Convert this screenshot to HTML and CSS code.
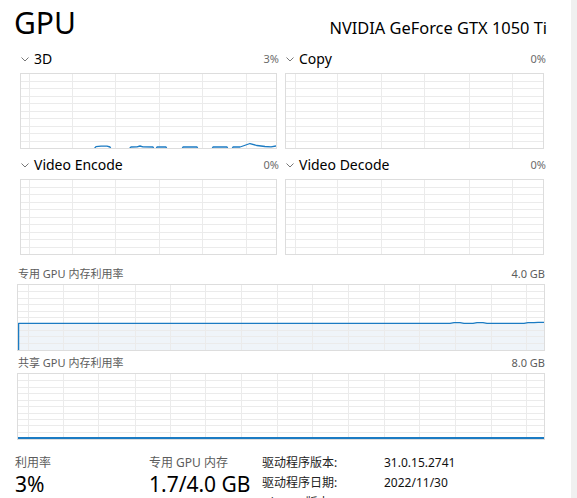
FILE: index.html
```html
<!DOCTYPE html>
<html lang="zh-CN">
<head>
<meta charset="utf-8">
<title>GPU</title>
<link rel="stylesheet" href="styles.css">
</head>
<body>
<div class="window">
  <main class="content">
    <header class="head">
      <h1 class="title">GPU</h1>
      <div class="model">NVIDIA GeForce GTX 1050 Ti</div>
    </header>

    <section class="engines">
      <div class="engine">
        <div class="eng-head">
          <svg class="chev" width="8" height="5" viewBox="0 0 8 5"><polyline points="0.5,0.5 4,4 7.5,0.5" /></svg>
          <span class="eng-name">3D</span>
          <span class="pct">3%</span>
        </div>
        <div class="chart small">
          <svg viewBox="0 0 255 74" width="255" height="74" shape-rendering="crispEdges">
            <g class="grid">
              <line x1="0" y1="7.5" x2="255" y2="7.5"/><line x1="0" y1="14.5" x2="255" y2="14.5"/><line x1="0" y1="22.5" x2="255" y2="22.5"/><line x1="0" y1="29.5" x2="255" y2="29.5"/><line x1="0" y1="37.5" x2="255" y2="37.5"/><line x1="0" y1="44.5" x2="255" y2="44.5"/><line x1="0" y1="52.5" x2="255" y2="52.5"/><line x1="0" y1="59.5" x2="255" y2="59.5"/><line x1="0" y1="67.5" x2="255" y2="67.5"/>
              <line x1="8.5" y1="0" x2="8.5" y2="74"/><line x1="51.5" y1="0" x2="51.5" y2="74"/><line x1="94.5" y1="0" x2="94.5" y2="74"/><line x1="138.5" y1="0" x2="138.5" y2="74"/><line x1="181.5" y1="0" x2="181.5" y2="74"/><line x1="225.5" y1="0" x2="225.5" y2="74"/>
            </g>
            <polyline class="usage" shape-rendering="auto" points="0,75 73,75 75,72.6 80,72.2 86,72.2 89,73 90,75 108,75 110,73 116,72.8 119,72 122,72.8 132,73 133,75 135,75 136,73 145,73 146,75 161,75 162,73 176,73 177,75 191,75 192,73 206,73 207,75 211,75 212,73 219,73 222,72 229,69.5 236,71.5 244,72.5 250,72.8 255,72"/>
          </svg>
        </div>
      </div>

      <div class="engine">
        <div class="eng-head">
          <svg class="chev" width="8" height="5" viewBox="0 0 8 5"><polyline points="0.5,0.5 4,4 7.5,0.5" /></svg>
          <span class="eng-name">Copy</span>
          <span class="pct">0%</span>
        </div>
        <div class="chart small">
          <svg viewBox="0 0 257 74" width="257" height="74" shape-rendering="crispEdges">
            <g class="grid">
              <line x1="0" y1="7.5" x2="257" y2="7.5"/><line x1="0" y1="14.5" x2="257" y2="14.5"/><line x1="0" y1="22.5" x2="257" y2="22.5"/><line x1="0" y1="29.5" x2="257" y2="29.5"/><line x1="0" y1="37.5" x2="257" y2="37.5"/><line x1="0" y1="44.5" x2="257" y2="44.5"/><line x1="0" y1="52.5" x2="257" y2="52.5"/><line x1="0" y1="59.5" x2="257" y2="59.5"/><line x1="0" y1="67.5" x2="257" y2="67.5"/>
              <line x1="9.5" y1="0" x2="9.5" y2="74"/><line x1="51.5" y1="0" x2="51.5" y2="74"/><line x1="95.5" y1="0" x2="95.5" y2="74"/><line x1="138.5" y1="0" x2="138.5" y2="74"/><line x1="183.5" y1="0" x2="183.5" y2="74"/><line x1="226.5" y1="0" x2="226.5" y2="74"/>
            </g>
          </svg>
        </div>
      </div>

      <div class="engine">
        <div class="eng-head">
          <svg class="chev" width="8" height="5" viewBox="0 0 8 5"><polyline points="0.5,0.5 4,4 7.5,0.5" /></svg>
          <span class="eng-name">Video Encode</span>
          <span class="pct">0%</span>
        </div>
        <div class="chart small">
          <svg viewBox="0 0 255 74" width="255" height="74" shape-rendering="crispEdges">
            <g class="grid">
              <line x1="0" y1="7.5" x2="255" y2="7.5"/><line x1="0" y1="14.5" x2="255" y2="14.5"/><line x1="0" y1="22.5" x2="255" y2="22.5"/><line x1="0" y1="29.5" x2="255" y2="29.5"/><line x1="0" y1="37.5" x2="255" y2="37.5"/><line x1="0" y1="44.5" x2="255" y2="44.5"/><line x1="0" y1="52.5" x2="255" y2="52.5"/><line x1="0" y1="59.5" x2="255" y2="59.5"/><line x1="0" y1="67.5" x2="255" y2="67.5"/>
              <line x1="8.5" y1="0" x2="8.5" y2="74"/><line x1="51.5" y1="0" x2="51.5" y2="74"/><line x1="94.5" y1="0" x2="94.5" y2="74"/><line x1="138.5" y1="0" x2="138.5" y2="74"/><line x1="181.5" y1="0" x2="181.5" y2="74"/><line x1="225.5" y1="0" x2="225.5" y2="74"/>
            </g>
          </svg>
        </div>
      </div>

      <div class="engine">
        <div class="eng-head">
          <svg class="chev" width="8" height="5" viewBox="0 0 8 5"><polyline points="0.5,0.5 4,4 7.5,0.5" /></svg>
          <span class="eng-name">Video Decode</span>
          <span class="pct">0%</span>
        </div>
        <div class="chart small">
          <svg viewBox="0 0 257 74" width="257" height="74" shape-rendering="crispEdges">
            <g class="grid">
              <line x1="0" y1="7.5" x2="257" y2="7.5"/><line x1="0" y1="14.5" x2="257" y2="14.5"/><line x1="0" y1="22.5" x2="257" y2="22.5"/><line x1="0" y1="29.5" x2="257" y2="29.5"/><line x1="0" y1="37.5" x2="257" y2="37.5"/><line x1="0" y1="44.5" x2="257" y2="44.5"/><line x1="0" y1="52.5" x2="257" y2="52.5"/><line x1="0" y1="59.5" x2="257" y2="59.5"/><line x1="0" y1="67.5" x2="257" y2="67.5"/>
              <line x1="9.5" y1="0" x2="9.5" y2="74"/><line x1="51.5" y1="0" x2="51.5" y2="74"/><line x1="95.5" y1="0" x2="95.5" y2="74"/><line x1="138.5" y1="0" x2="138.5" y2="74"/><line x1="183.5" y1="0" x2="183.5" y2="74"/><line x1="226.5" y1="0" x2="226.5" y2="74"/>
            </g>
          </svg>
        </div>
      </div>
    </section>

    <section class="mem">
      <div class="mem-head">
        <span class="mem-name">专用 GPU 内存利用率</span>
        <span class="mem-cap">4.0 GB</span>
      </div>
      <div class="chart wide">
        <svg viewBox="0 0 526 65" width="526" height="65" shape-rendering="crispEdges">
          <rect class="fill" x="0" y="38" width="526" height="27"/>
          <g class="grid">
            <line x1="0" y1="6.5" x2="526" y2="6.5"/><line x1="0" y1="13.5" x2="526" y2="13.5"/><line x1="0" y1="19.5" x2="526" y2="19.5"/><line x1="0" y1="26.5" x2="526" y2="26.5"/><line x1="0" y1="32.5" x2="526" y2="32.5"/><line x1="0" y1="45.5" x2="526" y2="45.5"/><line x1="0" y1="51.5" x2="526" y2="51.5"/><line x1="0" y1="58.5" x2="526" y2="58.5"/>
            <line x1="10.5" y1="0" x2="10.5" y2="65"/><line x1="45.5" y1="0" x2="45.5" y2="65"/><line x1="80.5" y1="0" x2="80.5" y2="65"/><line x1="117.5" y1="0" x2="117.5" y2="65"/><line x1="152.5" y1="0" x2="152.5" y2="65"/><line x1="187.5" y1="0" x2="187.5" y2="65"/><line x1="223.5" y1="0" x2="223.5" y2="65"/><line x1="259.5" y1="0" x2="259.5" y2="65"/><line x1="294.5" y1="0" x2="294.5" y2="65"/><line x1="330.5" y1="0" x2="330.5" y2="65"/><line x1="366.5" y1="0" x2="366.5" y2="65"/><line x1="401.5" y1="0" x2="401.5" y2="65"/><line x1="437.5" y1="0" x2="437.5" y2="65"/><line x1="473.5" y1="0" x2="473.5" y2="65"/><line x1="508.5" y1="0" x2="508.5" y2="65"/>
          </g>
          <polyline class="usage" shape-rendering="auto" points="0.6,65 0.6,38.4 432,38.4 436,37.6 442,37.6 446,38.4 455,38.4 459,37.6 465,37.6 469,38.4 506,38.4 510,37.6 516,37.6 520,37.4 526,37.4"/>
        </svg>
      </div>
    </section>

    <section class="mem shared">
      <div class="mem-head">
        <span class="mem-name">共享 GPU 内存利用率</span>
        <span class="mem-cap">8.0 GB</span>
      </div>
      <div class="chart wide">
        <svg viewBox="0 0 526 65" width="526" height="65" shape-rendering="crispEdges">
          <g class="grid">
            <line x1="0" y1="6.5" x2="526" y2="6.5"/><line x1="0" y1="13.5" x2="526" y2="13.5"/><line x1="0" y1="19.5" x2="526" y2="19.5"/><line x1="0" y1="26.5" x2="526" y2="26.5"/><line x1="0" y1="32.5" x2="526" y2="32.5"/><line x1="0" y1="39.5" x2="526" y2="39.5"/><line x1="0" y1="45.5" x2="526" y2="45.5"/><line x1="0" y1="51.5" x2="526" y2="51.5"/><line x1="0" y1="58.5" x2="526" y2="58.5"/>
            <line x1="10.5" y1="0" x2="10.5" y2="65"/><line x1="45.5" y1="0" x2="45.5" y2="65"/><line x1="80.5" y1="0" x2="80.5" y2="65"/><line x1="117.5" y1="0" x2="117.5" y2="65"/><line x1="152.5" y1="0" x2="152.5" y2="65"/><line x1="187.5" y1="0" x2="187.5" y2="65"/><line x1="223.5" y1="0" x2="223.5" y2="65"/><line x1="259.5" y1="0" x2="259.5" y2="65"/><line x1="294.5" y1="0" x2="294.5" y2="65"/><line x1="330.5" y1="0" x2="330.5" y2="65"/><line x1="366.5" y1="0" x2="366.5" y2="65"/><line x1="401.5" y1="0" x2="401.5" y2="65"/><line x1="437.5" y1="0" x2="437.5" y2="65"/><line x1="473.5" y1="0" x2="473.5" y2="65"/><line x1="508.5" y1="0" x2="508.5" y2="65"/>
          </g>
          <line class="base" x1="0" y1="64" x2="526" y2="64"/>
        </svg>
      </div>
    </section>

    <section class="stats">
      <div class="stat util">
        <div class="stat-label">利用率</div>
        <div class="stat-value">3%</div>
      </div>
      <div class="stat dedicated">
        <div class="stat-label">专用 GPU 内存</div>
        <div class="stat-value">1.7/4.0 GB</div>
      </div>
      <dl class="info">
        <dt>驱动程序版本:</dt><dd>31.0.15.2741</dd>
        <dt>驱动程序日期:</dt><dd>2022/11/30</dd>
        <dt>DirectX 版本:</dt><dd>12 (FL 12.1)</dd>
      </dl>
    </section>
  </main>
  <div class="edge"></div>
</div>
</body>
</html>
```
FILE: styles.css
```css
* { box-sizing: border-box; }

html, body {
  margin: 0;
  padding: 0;
  background: #ffffff;
  overflow: hidden;
}

body {
  font-family: "Noto Sans", "Noto Sans CJK SC", sans-serif;
  color: #000;
  width: 577px;
  height: 498px;
}

.window {
  display: flex;
  height: 498px;
}

.content {
  width: 571px;
  flex: none;
}

.edge {
  flex: 1;
  background: #f0f0f0;
}

/* header */
.head {
  display: flex;
  align-items: baseline;
  justify-content: space-between;
  height: 48px;
  padding: 5px 24px 0 14px;
}

.title {
  margin: 0;
  font-size: 30px;
  font-weight: 400;
  line-height: 36px;
}

.model {
  font-size: 16.4px;
  line-height: 22px;
}

/* engines grid */
.engines {
  display: grid;
  grid-template-columns: 257px 259px;
  column-gap: 8px;
  row-gap: 5px;
  margin-left: 20px;
  width: 524px;
}

.eng-head {
  display: flex;
  align-items: center;
  height: 21px;
  margin-bottom: 4px;
}

.chev {
  flex: none;
  margin: 1px 5px 0 1px;
  fill: none;
  stroke: #777;
  stroke-width: 1;
}

.eng-name {
  font-size: 14px;
  flex: 1;
}

.pct {
  font-size: 11px;
  color: #6b6b6b;
  margin-right: -2px;
}

.chart {
  border: 1px solid #dddddd;
  background: #fff;
}

.chart svg { display: block; }

.chart.small { height: 76px; }

.grid line {
  stroke: #ebebeb;
  stroke-width: 1;
}

.usage {
  fill: none;
  stroke: #1b7bc3;
  stroke-width: 1.3;
  stroke-linejoin: round;
}

.fill { fill: #eff4f9; }

.base {
  stroke: #1b7bc3;
  stroke-width: 2;
}

/* memory charts */
.mem {
  margin: 9px 0 0 17px;
  width: 528px;
}

.mem.shared { margin-top: 2px; }

.mem-head {
  display: flex;
  justify-content: space-between;
  align-items: center;
  height: 18px;
  margin-bottom: 2px;
  font-size: 11px;
  color: #5c5c5c;
}

.mem-name { padding-left: 1px; }

.chart.wide { height: 67px; }

/* stats */
.stats {
  display: flex;
  align-items: flex-start;
  margin: 15px 0 0 15px;
}

.stat-label {
  font-size: 12px;
  line-height: 16px;
  color: #5c5c5c;
}

.stat-value {
  font-size: 21px;
  line-height: 27px;
}

.util { width: 134px; }

.dedicated { width: 113px; }

.info {
  display: grid;
  grid-template-columns: 122px auto;
  margin: -2px 0 0;
  font-size: 12px;
  line-height: 20px;
}

.info dt { color: #222; }

.info dd { margin: 0; color: #111; }
```
